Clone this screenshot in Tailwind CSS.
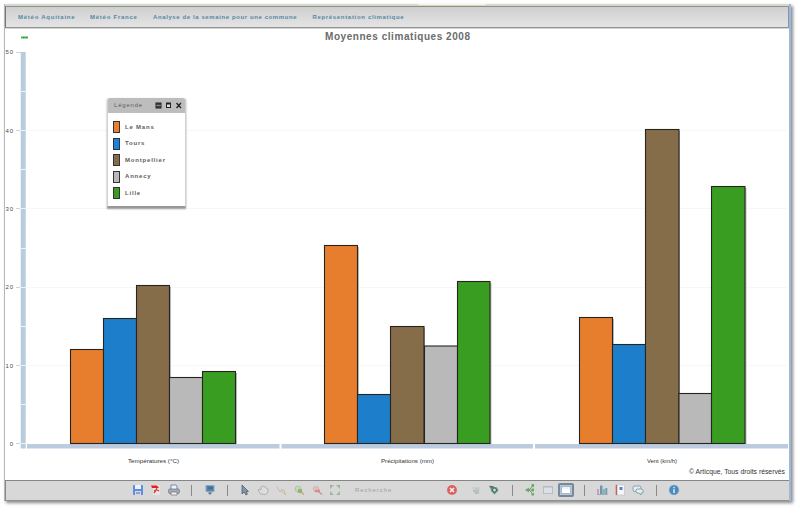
<!DOCTYPE html>
<html lang="fr">
<head>
<meta charset="utf-8">
<title>Moyennes climatiques 2008</title>
<script src="https://cdn.jsdelivr.net/npm/@tailwindcss/browser@4"></script>
</head>
<body class="w-[800px] h-[508px] overflow-hidden bg-[#fefefe] pl-1 pt-[4px] font-['Liberation_Sans',sans-serif]">
<div class="w-[787px] h-[497px] flex flex-col bg-white border-l border-l-[#b5b8ba] border-r-2 border-r-[#9db7da] shadow-[2px_2px_3px_#8b8b8b]">
  <div class="h-[2px] shrink-0 bg-[#d5d8cc] flex"><div class="ml-[413px] w-[68px] h-[1px] bg-[#f5f6dc]"></div></div>
  <nav class="h-[22px] shrink-0 flex items-center border-t border-t-[#8d908b] border-b border-b-[#929292] border-l border-l-[#777] border-r border-r-[#8294b5] bg-linear-to-b from-[#cfcfcf] to-[#e4e4e4] pl-[12px] text-[6px] font-bold text-[#5688a4] whitespace-nowrap">
    <span class="w-[72px] tracking-[0.75px]">Météo Aquitaine</span>
    <span class="w-[63px] tracking-[0.75px]">Météo France</span>
    <span class="w-[159.5px] tracking-[0.6px]">Analyse de la semaine pour une commune</span>
    <span class="tracking-[0.67px]">Représentation climatique</span>
  </nav>
  <main class="relative h-[452px] shrink-0">
    <svg class="block w-[784px] h-[452px]" viewBox="5 28 784 452" font-family="Liberation Sans, sans-serif">
      <path d="M5 28.5H789" stroke="#d5d5d5"/>
      <text x="325" y="40" font-size="10" font-weight="bold" fill="#6b6b6b" textLength="145">Moyennes climatiques 2008</text>
      <path d="M21 37.5h7" stroke="#43b943" stroke-width="2"/><path d="M23 37.5h1M26 37.5h1" stroke="#2e7d32" stroke-width="1"/>
      <g stroke="#f7f7f7"><path d="M27 130.5H787M27 208.5H787M27 287.5H787M27 365.5H787"/></g>
      <g fill="#4a4a4a" font-size="6" text-anchor="end">
        <text x="13" y="54" textLength="7.5">50</text><text x="13" y="132.5" textLength="7.5">40</text><text x="13" y="211" textLength="7.5">30</text><text x="13" y="289" textLength="7.5">20</text><text x="13" y="367.5" textLength="7.5">10</text><text x="13" y="446" textLength="4">0</text>
      </g>
      <path d="M16 52.5h5M16 130.5h5M16 208.5h5M16 287.5h5M16 365.5h5M16 443.5h5" stroke="#d0d5d8"/>
      <rect x="20.7" y="52" width="5" height="396.5" fill="#b8ccdb"/>
      <path d="M20 91.5h6M20 130.5h6M20 169.5h6M20 208.5h6M20 248.5h6M20 287.5h6M20 326.5h6M20 365.5h6M20 404.5h6M20 443.5h6" stroke="#edf2f5"/>
      <path d="M27 446.2H279.5M281.5 446.2H533M535 446.2H788" stroke="#bccbdd" stroke-width="4.6"/>
      <g fill="#999" opacity=".65">
        <path d="M72 351h33v-31h33v-33h33v92h33v-6h33v71H72zM326 247h33v149h33v-68h33v20h34v-65h32.500v161H326zM581 319h33v27h33V131h33v264h33V188h33.500v256H581z"/>
      </g>
      <g stroke="#272522" stroke-width="1.1">
        <g fill="#e67e2e"><rect x="70.500" y="349.500" width="33" height="94"/><rect x="324.500" y="245.500" width="33" height="198"/><rect x="579.500" y="317.500" width="33" height="126"/></g>
        <g fill="#1d7fcc"><rect x="103.500" y="318.500" width="33" height="125"/><rect x="357.500" y="394.500" width="33" height="49"/><rect x="612.500" y="344.500" width="33" height="99"/></g>
        <g fill="#866d4a"><rect x="136.500" y="285.500" width="33" height="158"/><rect x="390.500" y="326.500" width="33.500" height="117"/><rect x="645.500" y="129.500" width="33.500" height="314"/></g>
        <g fill="#b9b9b9"><rect x="169.500" y="377.500" width="33" height="66"/><rect x="424.500" y="346" width="33" height="97.500"/><rect x="679" y="393.500" width="32.500" height="50"/></g>
        <g fill="#389d20"><rect x="202.500" y="371.500" width="33" height="72"/><rect x="457.500" y="281.500" width="32.500" height="162"/><rect x="711.500" y="186.500" width="33.500" height="257"/></g>
      </g>
      <g fill="#333" font-size="6">
        <text x="128" y="463" textLength="51" lengthAdjust="spacingAndGlyphs">Températures (°C)</text>
        <text x="381" y="463" textLength="53" lengthAdjust="spacingAndGlyphs">Précipitations (mm)</text>
        <text x="647" y="463" textLength="30" lengthAdjust="spacingAndGlyphs">Vent (km/h)</text>
        <text x="689" y="474" font-size="7" textLength="96" lengthAdjust="spacingAndGlyphs">© Articque, Tous droits réservés</text>
      </g>
    </svg>
    <section class="absolute left-[102px] top-[70px] w-[79px] h-[110px] rounded-t-[2px] bg-white border-x border-x-[#d0d0d0] border-b-2 border-b-[#989898] shadow-[0_1px_2px_#999] font-bold text-[6px] text-[#5e5e5e]">
      <header class="h-[15px] flex items-center bg-[#bdbdbd] rounded-t-[2px] pl-[6px]">
        <span class="w-[41px] tracking-[0.8px] font-normal">Légende</span>
        <svg class="w-[27px] h-[7px]" viewBox="0 0 27 7" fill="none" stroke="#222"><rect x="1" y="1" width="5" height="5" fill="#444"/><path d="M1 3.500h5" stroke="#aaa" stroke-width=".6"/><rect x="11.500" y="1.500" width="4" height="4" fill="#ddd"/><path d="M11 1.500h5" stroke-width="2"/><path d="M21.500 1l4.500 5M26 1l-4.500 5" stroke-width="1.300"/></svg>
      </header>
      <ul class="pt-[6px] pl-[5px] tracking-[0.8px]">
        <li class="h-[16.500px] flex items-center gap-[5px]"><i class="w-[7px] h-[12px] border border-[#333] bg-[#f07d2b]"></i>Le Mans</li>
        <li class="h-[16.500px] flex items-center gap-[5px]"><i class="w-[7px] h-[12px] border border-[#333] bg-[#1984df]"></i>Tours</li>
        <li class="h-[16.500px] flex items-center gap-[5px]"><i class="w-[7px] h-[12px] border border-[#333] bg-[#866d4a]"></i>Montpellier</li>
        <li class="h-[16.500px] flex items-center gap-[5px]"><i class="w-[7px] h-[12px] border border-[#333] bg-[#b9b9b9]"></i>Annecy</li>
        <li class="h-[16.500px] flex items-center gap-[5px]"><i class="w-[7px] h-[12px] border border-[#333] bg-[#389d20]"></i>Lille</li>
      </ul>
    </section>
  </main>
  <footer class="h-[21px] shrink-0 flex items-center bg-[#d8d8d8] border-t border-t-[#858585] border-b border-b-[#909090] border-l border-l-[#888] pl-[123px] pb-px">
    <div class="w-[215px] grid grid-cols-12 justify-items-center items-center shrink-0">
      <svg class="w-[12px] h-[12px]" viewBox="0 0 12 12"><rect x="1" y="1" width="10" height="10" rx="1" fill="#5c8de0"/><rect x="3" y="1" width="6" height="4" fill="#edf3ff"/><rect x="3" y="7" width="6" height="4" fill="#cfdaed"/><path d="M4 9h4" stroke="#668" /></svg>
      <svg class="w-[12px] h-[12px]" viewBox="0 0 12 12"><path d="M3 1h6l1 2v8H3z" fill="#e8e4e4"/><path d="M1 1.500h6l2 2.500H2z" fill="#e02222"/><path d="M4 9Q7 6 7 3M4 7q3-2 5 0" fill="none" stroke="#dc3232" stroke-width="1.200"/></svg>
      <svg class="w-[12px] h-[12px]" viewBox="0 0 12 12"><path d="M3 5V1h5l1 1v3" fill="#edf4fc" stroke="#6e8caa"/><rect x=".7" y="5" width="10.600" height="4.500" rx="1" fill="#a3abb4" stroke="#747b84" stroke-width=".8"/><path d="M3 8h6v3H3z" fill="#eee" stroke="#777" stroke-width=".7"/></svg>
      <i class="w-px h-[11px] bg-[#898989]"></i>
      <svg class="w-[12px] h-[12px]" viewBox="0 0 12 12"><rect x="2" y="1.500" width="8" height="6" fill="#567fa8" stroke="#8caac5"/><path d="M4 4h5M6 8v2" stroke="#335f8d"/><path d="M3.500 8.500h5L6 11z" fill="#668199"/></svg>
      <i class="w-px h-[11px] bg-[#898989]"></i>
      <svg class="w-[12px] h-[12px]" viewBox="0 0 12 12"><path d="M3 1v9l2-2 2 3 1.500-1L7 7.500h2.500z" fill="#8296a7" stroke="#51616d" stroke-width=".8"/></svg>
      <svg class="w-[12px] h-[12px]" viewBox="0 0 12 12"><path d="M3.500 10L1 6l1-1 2 1V3l1.500-1L7 3l1.500-.5 1 2L11 5v3L9 10.500z" fill="#ddd" stroke="#aaa" stroke-width=".9"/></svg>
      <svg class="w-[12px] h-[12px]" viewBox="0 0 12 12"><path d="M2 3l3 5 2-3 3 4" fill="none" stroke="#bcbcc0"/><circle cx="8" cy="7" r="2" fill="#d6c9a0"/><path d="M9 9l2 2" stroke="#bea878"/></svg>
      <svg class="w-[12px] h-[12px]" viewBox="0 0 12 12"><circle cx="5" cy="5" r="3" fill="#c6d6b8" stroke="#b2c3a3"/><circle cx="7" cy="7" r="2.300" fill="#8db575"/><path d="M8 8l3 2.500" stroke="#c2a471" stroke-width="1.300"/></svg>
      <svg class="w-[12px] h-[12px]" viewBox="0 0 12 12"><circle cx="5" cy="5" r="2.700" fill="#ddc2c2" stroke="#ccb8b8"/><path d="M4 7h5" stroke="#dc8b8b" stroke-width="2.500"/><path d="M8 8l3 2.500" stroke="#c89191" stroke-width="1.300"/></svg>
      <svg class="w-[12px] h-[12px]" viewBox="0 0 12 12"><path d="M1 1h4L1 5zM11 1H7l4 4zM1 11h4L1 7zM11 11H7l4-4z" fill="#99b899"/></svg>
    </div>
    <span class="ml-[11px] w-[90.500px] shrink-0 text-[6px] tracking-[0.9px] text-[#a0a0a0]">Recherche</span>
    <svg class="w-[12px] h-[12px] shrink-0" viewBox="0 0 12 12"><circle cx="6" cy="6" r="4.900" fill="#dc6060"/><path d="M4 4l4 4M8 4l-4 4" stroke="#fff1f1" stroke-width="1.500"/></svg>
    <svg class="ml-[12px] w-[12px] h-[12px] shrink-0" viewBox="0 0 12 12"><path d="M2 3h8v3L7 10H4z" fill="#cbd0cf"/><path d="M3 7h6M5 9h4" stroke="#9db19f"/><circle cx="7" cy="5" r="1.500" fill="#bbc6d4"/></svg>
    <div class="ml-[4px] w-[197.500px] shrink-0 grid grid-cols-11 justify-items-center items-center">
      <svg class="w-[12px] h-[12px]" viewBox="0 0 12 12"><path d="M2 2l7 1.500 1.500 3-4 4L3 7z" fill="#64957f"/><circle cx="6.500" cy="6" r="2" fill="#c6dcd0" stroke="#386e58"/><path d="M1.500 2.500l4 .5" stroke="#57656a" stroke-width="1.500"/></svg>
      <i class="w-px h-[11px] bg-[#898989]"></i>
      <svg class="w-[12px] h-[12px]" viewBox="0 0 12 12"><path d="M2 6h3M5 6l4-4M5 6h5M5 6l4 4" stroke="#72a36f" fill="none"/><g fill="#6ca963"><path d="M1 6l4-2.500v5z"/><rect x="7.500" y="0" width="2.500" height="3"/><rect x="7.500" y="4.500" width="2.500" height="3"/><rect x="7.500" y="9" width="2.500" height="2.500"/></g></svg>
      <svg class="w-[12px] h-[12px]" viewBox="0 0 12 12"><rect x="1.500" y="2.500" width="9" height="7" fill="#dedfe2" stroke="#b7bdc8"/><path d="M1 3h10" stroke="#a9b8d2"/></svg>
      <svg class="w-[16px] h-[14px]" viewBox="0 0 16 14"><rect x="1" y="1" width="14" height="12" rx="1" fill="#bac5d0" stroke="#77889a" stroke-width="2"/><rect x="3.500" y="3.500" width="9" height="7" fill="#fff" stroke="#8daace" stroke-width=".7"/><path d="M4 5h8" stroke="#d8e3ef"/></svg>
      <i class="w-px h-[11px] bg-[#898989]"></i>
      <svg class="w-[12px] h-[12px]" viewBox="0 0 12 12"><rect x="1" y="5" width="2" height="5" fill="#d69cad"/><rect x="4" y="1.500" width="2.500" height="8.500" fill="#6798bc"/><rect x="7" y="5" width="1.800" height="5" fill="#80b88b"/><rect x="9.300" y="4" width="2" height="6" fill="#709bc0"/><path d="M1 10.500h10.500" stroke="#a0aab4"/></svg>
      <svg class="w-[12px] h-[12px]" viewBox="0 0 12 12"><rect x="2" y="1" width="8.500" height="10" fill="#f5f6fb" stroke="#bbbfc8" stroke-width=".6"/><path d="M2.500 1v10" stroke="#c5674b" stroke-width="1.500"/><rect x="5.500" y="3" width="3" height="3" fill="#637ec5"/></svg>
      <svg class="w-[12px] h-[12px]" viewBox="0 0 12 12"><g fill="#e3edf0" stroke="#88a5ae"><path d="M2 2h6l1 1v3L8 7H4L2 8V7L1 6V3z"/><path d="M5 5h5l1 1v3H9v2L7 9H5L4 8V6z"/></g></svg>
      <i class="w-px h-[11px] bg-[#898989]"></i>
      <svg class="w-[12px] h-[12px]" viewBox="0 0 12 12"><circle cx="6" cy="6" r="4.800" fill="#4b8abd" stroke="#79a5c9" stroke-width=".8"/><path d="M6 5.200V9M6 3v1.300" stroke="#e3f0fb" stroke-width="1.500"/></svg>
    </div>
  </footer>
</div>
</body>
</html>
